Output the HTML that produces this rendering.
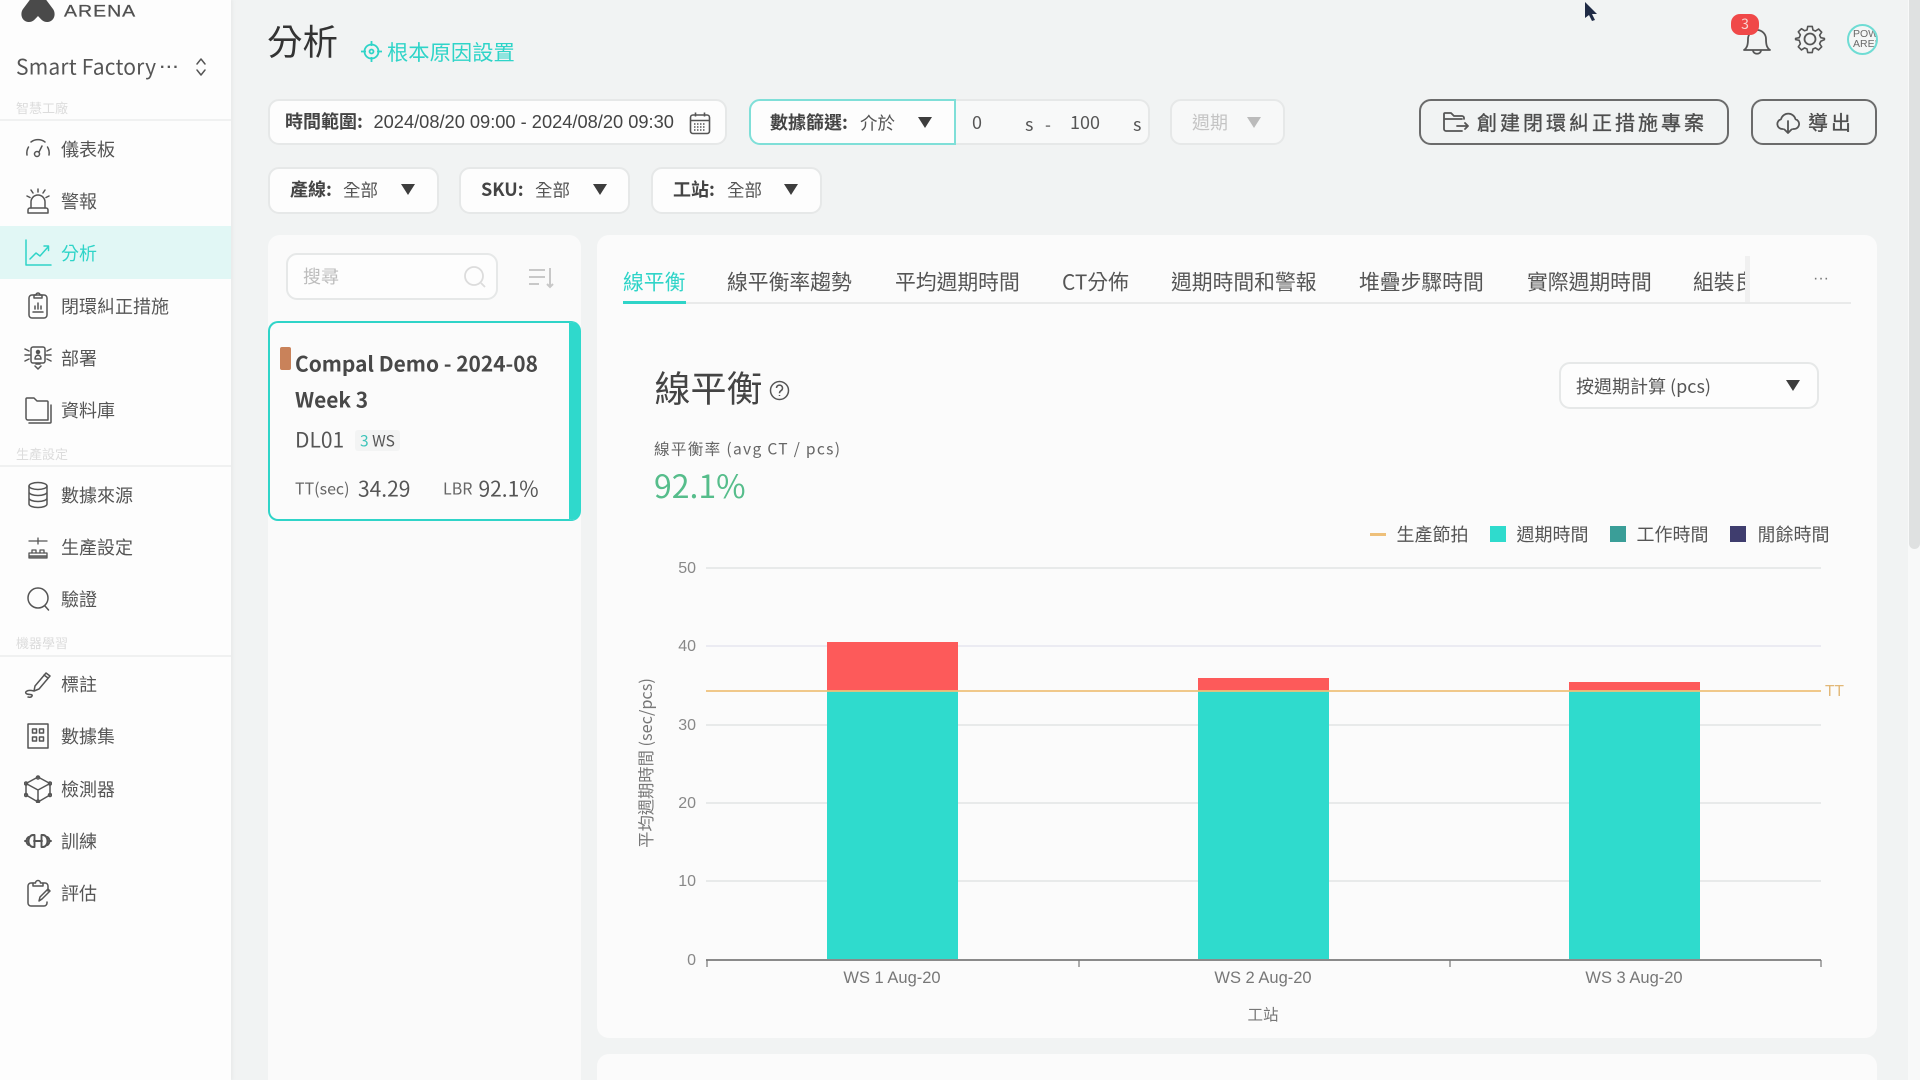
<!DOCTYPE html>
<html lang="zh-Hant"><head><meta charset="utf-8"><title>分析</title>
<style>
*{box-sizing:border-box}
html,body{margin:0;padding:0;width:1920px;height:1080px;overflow:hidden;background:#f1f3f3;font-family:"Noto Sans CJK TC","Liberation Sans",sans-serif;color:#555}
.a{position:absolute}
.t{position:absolute;transform:translateY(-50%);white-space:nowrap;line-height:1.2}
.box{position:absolute;background:#fdfdfd;border:2px solid #e6e8e8;border-radius:11px}
.side{position:absolute;left:0;top:0;width:231px;height:1080px;background:#fdfdfd;box-shadow:2px 0 3px #e8eaea}
.lab{position:absolute;left:16px;font-size:13px;color:#dcdcdc;transform:translateY(-50%);line-height:1.2}
.div{position:absolute;left:0;width:231px;height:2px;background:#f0f1f1}
.it{position:absolute;left:61px;font-size:18px;color:#555;transform:translateY(-50%);line-height:1.2;white-space:nowrap}
.ic{position:absolute;left:24px;width:28px;height:28px;fill:none;stroke:#555;stroke-width:1.5;stroke-linecap:round;stroke-linejoin:round}
.tri{position:absolute;width:0;height:0;border-left:7.5px solid transparent;border-right:7.5px solid transparent;border-top:11px solid #3d3d3d}
.b{font-weight:700;color:#444}
.tab{position:absolute;top:280.5px;font-size:20.8px;color:#555;transform:translateY(-50%);line-height:1.2;white-space:nowrap}
.leg{position:absolute;top:535px;font-size:18px;color:#555;transform:translateY(-50%);line-height:1.2;white-space:nowrap}
.sq{position:absolute;top:526px;width:16px;height:16px}
</style></head><body>

<!-- sidebar -->
<div class="side"></div>
<svg class="a" style="left:20px;top:-5px;width:36px;height:28px" viewBox="0 0 36 28"><path d="M18 -2C14 -2 12 2 9 6L3 14C0 18 1 26 8 27C13 27.500 15 24 18 21C21 24 23 27.500 28 27C35 26 36 18 33 14L27 6C24 2 22 -2 18 -2Z" fill="#4a4a4a"/></svg>
<div class="t" style="left:64px;top:12px;font:400 19.500px 'Liberation Sans',sans-serif;color:#505050;letter-spacing:1px;transform:translateY(-50%) scaleY(.85);transform-origin:left center;-webkit-text-stroke:.3px #505050">ARENA</div>
<div class="t" style="left:16px;top:67px;font-size:21px;color:#555;letter-spacing:.2px">Smart Factory</div>
<div class="t" style="left:160px;top:64px;font:700 16px 'Liberation Sans',sans-serif;color:#555;letter-spacing:2.200px">...</div>
<svg class="a" style="left:192px;top:56px;width:18px;height:22px;fill:none;stroke:#555;stroke-width:1.500;stroke-linecap:round;stroke-linejoin:round" viewBox="0 0 18 22"><path d="M5 8l4-5 4 5M5 14l4 5 4-5"/></svg>

<div class="lab" style="top:108px">智慧工廠</div><div class="div" style="top:119px"></div>
<div class="a" style="left:0;top:226px;width:231px;height:53px;background:#e1f7f5"></div>

<svg class="ic" style="top:134px" viewBox="0 0 28 28"><path d="M3 21a11.500 11.500 0 0 1 1.500-8M7 8a11.500 11.500 0 0 1 14 0M23.500 13a11.500 11.500 0 0 1 1.500 8"/><circle cx="13" cy="20" r="2.500"/><path d="M15 18l3-6"/></svg>
<div class="it" style="top:149.500px">儀表板</div>
<svg class="ic" style="top:187px" viewBox="0 0 28 28"><path d="M7 21v-6a7 7 0 0 1 14 0v6"/><path d="M4 26h20v-3a2 2 0 0 0-2-2H6a2 2 0 0 0-2 2z"/><path d="M14 2v3M7 3l2 3M21 3l-2 3M3 9l3 1.500M25 9l-3 1.500"/></svg>
<div class="it" style="top:201.500px">警報</div>
<svg class="ic" style="top:239px;stroke:#2fd4c8" viewBox="0 0 28 28"><path d="M2 1v25h25"/><path d="M6 20l6-6 4 3 8-9M20 7h4.500v4.500"/></svg>
<div class="it" style="top:254px;color:#2fd4c8">分析</div>
<svg class="ic" style="top:291px" viewBox="0 0 28 28"><rect x="5" y="4" width="18" height="23" rx="3"/><path d="M10 7V4h2a2 2 0 0 1 4 0h2v3zM9 21h10M11 18v-3M14 18v-6M17 18v-3"/></svg>
<div class="it" style="top:306.500px">閉環糾正措施</div>
<svg class="ic" style="top:344px" viewBox="0 0 28 28"><rect x="7" y="3" width="14" height="16" rx="2"/><circle cx="14" cy="8" r="1.500" fill="#555"/><path d="M11 15c0-5 6-5 6 0zM11 22l3 3 3-3M12 20h4M1 5l4 2M1 11h5M1 17l4-2M27 5l-4 2M27 11h-5M27 17l-4-2"/></svg>
<div class="it" style="top:358.500px">部署</div>
<svg class="ic" style="top:396px" viewBox="0 0 28 28"><path d="M2 22V3a1 1 0 0 1 1-1h7l3 3h10a1 1 0 0 1 1 1v18H4a2 2 0 0 1-2-2z"/><path d="M5 27h21a1 1 0 0 0 1-1V9"/></svg>
<div class="it" style="top:410.500px">資料庫</div>

<div class="lab" style="top:454px">生產設定</div><div class="div" style="top:465px"></div>
<svg class="ic" style="top:481px" viewBox="0 0 28 28"><ellipse cx="14" cy="5" rx="9" ry="3.500"/><path d="M5 5v18c0 2 4 3.500 9 3.500s9-1.500 9-3.500V5M5 11c0 2 4 3.500 9 3.500s9-1.500 9-3.500M5 17c0 2 4 3.500 9 3.500s9-1.500 9-3.500"/></svg>
<div class="it" style="top:495.500px">數據來源</div>
<svg class="ic" style="top:533px;stroke-width:1.300" viewBox="0 0 28 28"><path d="M5 8h18M14 5v6M8 20v-3h4v3M16 20v-3h4v3"/><path d="M5 20h18v3H5z"/><path d="M5 23h18v2H5z" fill="#888"/></svg>
<div class="it" style="top:548px">生產設定</div>
<svg class="ic" style="top:585px" viewBox="0 0 28 28"><circle cx="14" cy="13" r="10"/><path d="M21 21l3.500 4"/></svg>
<div class="it" style="top:600px">驗證</div>

<div class="lab" style="top:643px">機器學習</div><div class="div" style="top:655px"></div>
<svg class="ic" style="top:670px" viewBox="0 0 28 28"><path d="M11 16l11-13 4 3-11 13-5 2zM20 5l4 3M10 21c-8-2-10 2-7 3s6 0 5 2-3 1-4 1"/></svg>
<div class="it" style="top:685px">標註</div>
<svg class="ic" style="top:722px" viewBox="0 0 28 28"><rect x="4" y="2" width="20" height="24"/><rect x="8.500" y="7" width="4" height="4"/><rect x="15.500" y="7" width="4" height="4"/><rect x="8.500" y="15" width="4" height="4"/><rect x="15.500" y="15" width="4" height="4"/></svg>
<div class="it" style="top:737px">數據集</div>
<svg class="ic" style="top:775px" viewBox="0 0 28 28"><path d="M14 2L26 8.500V20L14 27 2 20V8.500zM2 8.500L14 15 26 8.500M14 15v12"/><circle cx="14" cy="2.500" r="1.500"/><circle cx="26" cy="8.500" r="1.500"/><circle cx="2" cy="8.500" r="1.500"/><circle cx="14" cy="26.500" r="1.500"/><circle cx="2" cy="20" r="1.500"/><circle cx="26" cy="20" r="1.500"/></svg>
<div class="it" style="top:789.500px">檢測器</div>
<svg class="ic" style="top:827px;stroke-width:1.900" viewBox="0 0 28 28"><path d="M1 14h2M27 14h-2M10 14h8"/><path d="M9 8a4.500 6 0 0 0 0 12h1.500V8zM19 8a4.500 6 0 0 1 0 12h-1.500V8z"/><path d="M4.500 10a5 5 0 0 0 0 8M23.500 10a5 5 0 0 1 0 8"/></svg>
<div class="it" style="top:841.500px">訓練</div>
<svg class="ic" style="top:879px" viewBox="0 0 28 28"><path d="M9 4H7a3 3 0 0 0-3 3v17a3 3 0 0 0 3 3h13a3 3 0 0 0 3-3v-1M19 4h2a3 3 0 0 1 3 3v5"/><path d="M9 7V4h2.500a2.500 2.500 0 0 1 5 0H19v3zM15 22l1-4 8-8 2 2-8 8z"/></svg>
<div class="it" style="top:893.500px">評估</div>

<!-- header -->
<div class="t" style="left:267px;top:41px;font-size:35.500px;color:#333">分析</div>
<svg class="a" style="left:361px;top:41px;width:21px;height:21px;fill:none;stroke:#2fd4c8;stroke-width:1.800" viewBox="0 0 21 21"><circle cx="10.500" cy="10.500" r="7"/><circle cx="10.500" cy="10.500" r="2"/><path d="M10.500 0v5M10.500 16v5M0 10.500h5M16 10.500h5"/></svg>
<div class="t" style="left:387px;top:51.500px;font-size:21.300px;color:#2fd4c8">根本原因設置</div>

<svg class="a" style="left:1584px;top:1px;width:15px;height:21px" viewBox="0 0 15 21"><path d="M1 1v16l4-3 3 6 3-1-3-6h5z" fill="#1f2a44"/></svg>

<svg class="a" style="left:1742px;top:24px;width:30px;height:32px;fill:none;stroke:#555;stroke-width:1.800;stroke-linecap:round;stroke-linejoin:round" viewBox="0 0 30 32"><path d="M2 26c3-2 4-5 4-11a9 9 0 0 1 18 0c0 6 1 9 4 11z M11 26c0 5 8 5 8 0"/></svg>
<div class="a" style="left:1731px;top:14px;width:28px;height:21px;border-radius:9px;background:#f04848;color:#f9d5d0;font-size:14px;text-align:center;line-height:21px">3</div>
<svg class="a" style="left:1794px;top:23px;width:32px;height:32px;fill:none;stroke:#555;stroke-width:1.800;stroke-linejoin:round" viewBox="0 0 32 32"><circle cx="16" cy="16" r="5.500"/><path d="M13.500 2h5l.8 4 2.800 1.200 3.400-2.300 3.500 3.500-2.300 3.400L28 14.500l4 .8v1.400l-4 1.800-1.300 2.800 2.300 3.400-3.500 3.500-3.400-2.300-2.800 1.200-.8 4h-5l-.8-4-2.800-1.200-3.400 2.300-3.500-3.500 2.300-3.400L4 17.500 0 16.700v-1.400l4-.8 1.300-3.100-2.300-3.400 3.500-3.500 3.400 2.300L12.700 6z" transform="translate(1.600 1.600) scale(.9)"/></svg>
<div class="a" style="left:1847px;top:24px;width:31px;height:31px;border-radius:50%;border:2px solid #6fdcd4;overflow:hidden;background:#f4f6f6;color:#6a6a6a;font:400 10.500px/9.500px 'Liberation Sans',sans-serif;padding:4px 0 0 4px;white-space:nowrap">POW<br>AREN</div>

<!-- filter row 1 -->
<div class="box" style="left:268px;top:99px;width:459px;height:46px"></div>
<div class="t b" style="left:285px;top:122px;font-size:18px">時間範圍:</div>
<div class="t" style="left:373.500px;top:122px;font:18.250px 'Liberation Sans',sans-serif;color:#444">2024/08/20 09:00 - 2024/08/20 09:30</div>
<svg class="a" style="left:689px;top:111px;width:22px;height:24px;fill:none;stroke:#555;stroke-width:1.600" viewBox="0 0 22 24"><rect x="1.500" y="4" width="19" height="18.500" rx="2.500"/><path d="M1.500 9.500h19M6.500 1.500v4M15.500 1.500v4"/><path d="M5 13h12M5 16h12M5 19h12" stroke-dasharray="1.500 1.500"/></svg>

<div class="box" style="left:955px;top:99px;width:195px;height:46px;border-radius:0 11px 11px 0;background:#f8f9f9;border-left:0"></div>
<div class="box" style="left:749px;top:99px;width:207px;height:46px;border-color:#7fdfd8;border-radius:11px 0 0 11px;background:#fdfdfd"></div>
<div class="t b" style="left:770px;top:123px;font-size:18px">數據篩選:</div>
<div class="t" style="left:860px;top:123px;font-size:17.500px;color:#555">介於</div>
<div class="tri" style="left:918px;top:117px"></div>
<div class="t" style="left:972px;top:123px;font-size:18px;color:#555">0</div>
<div class="t" style="left:1025px;top:125px;font-size:18px;color:#555">s</div>
<div class="t" style="left:1045px;top:124px;font-size:17px;color:#555">-</div>
<div class="t" style="left:1070px;top:123px;font-size:18px;color:#555">100</div>
<div class="t" style="left:1133px;top:125px;font-size:18px;color:#555">s</div>
<div class="box" style="left:1170px;top:99px;width:115px;height:46px;background:#f7f8f8"></div>
<div class="t" style="left:1192px;top:123px;font-size:18px;color:#c4c4c4">週期</div>
<div class="tri" style="left:1247px;top:117px;border-top-color:#bbb"></div>

<div class="a" style="left:1419px;top:99px;width:310px;height:46px;border:2px solid #6b6b6b;border-radius:12px"></div>
<svg class="a" style="left:1443px;top:111px;width:26px;height:22px;fill:none;stroke:#555;stroke-width:1.800;stroke-linecap:round;stroke-linejoin:round" viewBox="0 0 26 22"><path d="M19 20H3a2 2 0 0 1-2-2V3a1 1 0 0 1 1-1h6l3 3h8a2 2 0 0 1 2 2v1M1 8h18M14 15h11M22 12l3 3-3 3"/></svg>
<div class="t" style="left:1477px;top:122px;font-size:20px;color:#4e4e4e;letter-spacing:3px;-webkit-text-stroke:.35px #4e4e4e">創建閉環糾正措施專案</div>
<div class="a" style="left:1751px;top:99px;width:126px;height:46px;border:2px solid #6b6b6b;border-radius:12px"></div>
<svg class="a" style="left:1776px;top:111px;width:24px;height:24px;fill:none;stroke:#555;stroke-width:1.800;stroke-linecap:round;stroke-linejoin:round" viewBox="0 0 24 24"><path d="M7 18H6a5 5 0 0 1-1-9.800 7.500 7.500 0 0 1 14.500 0A5 5 0 0 1 18 18h-1M12 10v12M8.500 18.500L12 22l3.500-3.500"/></svg>
<div class="t" style="left:1808px;top:122px;font-size:20px;color:#4e4e4e;letter-spacing:3px;-webkit-text-stroke:.35px #4e4e4e">導出</div>

<!-- filter row 2 -->
<div class="box" style="left:268px;top:166.500px;width:171px;height:47px"></div>
<div class="t b" style="left:290px;top:190px;font-size:18px">產線:</div>
<div class="t" style="left:343px;top:190px;font-size:17.500px">全部</div>
<div class="tri" style="left:401px;top:184px"></div>
<div class="box" style="left:459px;top:166.500px;width:171px;height:47px"></div>
<div class="t b" style="left:481px;top:190px;font-size:18px">SKU:</div>
<div class="t" style="left:535px;top:190px;font-size:17.500px">全部</div>
<div class="tri" style="left:593px;top:184px"></div>
<div class="box" style="left:651px;top:166.500px;width:171px;height:47px"></div>
<div class="t b" style="left:673px;top:190px;font-size:18px">工站:</div>
<div class="t" style="left:727px;top:190px;font-size:17.500px">全部</div>
<div class="tri" style="left:784px;top:184px"></div>

<!-- left panel -->
<div class="a" style="left:268px;top:235px;width:313px;height:845px;background:#fafafa;border-radius:12px 12px 0 0"></div>
<div class="box" style="left:286px;top:253px;width:212px;height:47px"></div>
<div class="t" style="left:303px;top:277px;font-size:18px;color:#bdbdbd">搜尋</div>
<svg class="a" style="left:463px;top:264px;width:24px;height:26px;fill:none;stroke:#dcdcdc;stroke-width:1.800" viewBox="0 0 24 26"><circle cx="11" cy="12" r="9"/><path d="M18 19l4 4"/></svg>
<svg class="a" style="left:527px;top:266px;width:28px;height:24px;fill:none;stroke:#c8c8c8;stroke-width:2" viewBox="0 0 28 24"><path d="M2 4h16M2 11h16M2 18h10M23 2v19M20 18l3 3 3-3"/></svg>

<div class="a" style="left:268px;top:321px;width:313px;height:200px;background:#fbfbfb;border:2px solid #2fd4c8;border-right:12px solid #2fd9cc;border-radius:10px"></div>
<div class="a" style="left:280px;top:347px;width:11px;height:23px;background:#c9825a;border-radius:2px"></div>
<div class="t" style="left:295px;top:363.500px;font-size:20.900px;font-weight:700;color:#484848">Compal Demo - 2024-08</div>
<div class="t" style="left:295px;top:400px;font-size:20.900px;font-weight:700;color:#484848">Week 3</div>
<div class="t" style="left:295px;top:440px;font-size:21px;color:#555">DL01</div>
<div class="a" style="left:355px;top:430px;width:45px;height:21px;background:#f3f4f4;border-radius:3px"></div>
<div class="t" style="left:360px;top:441px;font-size:15.500px;color:#555"><span style="color:#3fc4ba">3</span> WS</div>
<div class="t" style="left:295px;top:488px;font-size:16px;color:#666">TT(sec)</div>
<div class="t" style="left:358px;top:489px;font-size:21px;color:#555">34.29</div>
<div class="t" style="left:443px;top:488px;font-size:16px;color:#666">LBR</div>
<div class="t" style="left:478.500px;top:489px;font-size:21px;color:#555">92.1%</div>

<!-- right panel -->
<div class="a" style="left:597px;top:235px;width:1280px;height:803px;background:#fbfbfb;border-radius:12px"></div>
<div class="a" style="left:597px;top:1054px;width:1280px;height:26px;background:#fbfbfb;border-radius:12px 12px 0 0"></div>

<div class="tab" style="left:623px;color:#2fd4c8">線平衡</div>
<div class="tab" style="left:727px">線平衡率趨勢</div>
<div class="tab" style="left:895px">平均週期時間</div>
<div class="tab" style="left:1062px">CT分佈</div>
<div class="tab" style="left:1171px">週期時間和警報</div>
<div class="tab" style="left:1359px">堆疊步驟時間</div>
<div class="tab" style="left:1527px">實際週期時間</div>
<div class="tab" style="left:1693px;width:56px;overflow:hidden">組裝良率</div>
<div class="a" style="left:1745px;top:256px;width:5px;height:46px;background:#f0f0f0"></div>
<div class="t" style="left:1813px;top:279px;font:16px 'Liberation Sans',sans-serif;color:#777">···</div>
<div class="a" style="left:623px;top:302px;width:1228px;height:2px;background:#e9eaea"></div>
<div class="a" style="left:623px;top:301px;width:63px;height:3px;background:#2fd4c8"></div>

<div class="t" style="left:654.500px;top:386.500px;font-size:36px;color:#444">線平衡</div>
<svg class="a" style="left:769px;top:380px;width:21px;height:21px;fill:none;stroke:#555;stroke-width:1.500" viewBox="0 0 21 21"><circle cx="10.500" cy="10.500" r="9"/><path d="M7.500 8a3 3 0 1 1 4.500 2.700c-1 .6-1.500 1.200-1.500 2.500M10.500 15v1"/></svg>
<div class="t" style="left:654px;top:449px;font-size:15.600px;color:#666;letter-spacing:1.300px">線平衡率 (avg CT / pcs)</div>
<div class="t" style="left:654px;top:485px;font-size:32px;color:#56bd8b">92.1%</div>

<div class="box" style="left:1559px;top:362px;width:260px;height:47px"></div>
<div class="t" style="left:1576px;top:386.500px;font-size:18px;color:#555">按週期計算 (pcs)</div>
<div class="tri" style="left:1786px;top:380px"></div>

<div class="a" style="left:1370px;top:533px;width:16px;height:3px;background:#eec07a"></div>
<div class="leg" style="left:1396.500px">生產節拍</div>
<div class="sq" style="left:1490px;background:#2fdbcd"></div>
<div class="leg" style="left:1516.500px">週期時間</div>
<div class="sq" style="left:1610px;background:#3a9e98"></div>
<div class="leg" style="left:1636.500px">工作時間</div>
<div class="sq" style="left:1730px;background:#3f3d6e"></div>
<div class="leg" style="left:1757.500px">閒餘時間</div>

<!-- chart -->
<svg class="a" style="left:0;top:0;width:1920px;height:1080px" viewBox="0 0 1920 1080">
<g stroke="#e8eaea" stroke-width="2"><path d="M706 568H1821M706 725H1821M706 803H1821M706 881H1821"/></g>
<path d="M706 646H1821" stroke="#e6e6f0" stroke-width="1.500"/>
<rect x="827" y="642" width="131" height="49" fill="#fd5a5a"/>
<rect x="1198" y="678" width="131" height="13" fill="#fd5a5a"/>
<rect x="1569" y="682" width="131" height="9" fill="#fd5a5a"/>
<rect x="827" y="691" width="131" height="269" fill="#2fdbcd"/>
<rect x="1198" y="691" width="131" height="269" fill="#2fdbcd"/>
<rect x="1569" y="691" width="131" height="269" fill="#2fdbcd"/>
<path d="M706 691H1821" stroke="#eec07a" stroke-width="1.800"/>
<path d="M706 960H1821" stroke="#8a8a8a" stroke-width="2"/>
<path d="M707 960v7M1079 960v7M1450 960v7M1821 960v7" stroke="#777" stroke-width="1.200"/>
<g font-family="Liberation Sans, sans-serif" font-size="16" fill="#888" text-anchor="end">
<text x="696" y="573">50</text><text x="696" y="651">40</text><text x="696" y="730">30</text><text x="696" y="808">20</text><text x="696" y="886">10</text><text x="696" y="965">0</text></g>
<g font-family="Liberation Sans, sans-serif" font-size="16.500" fill="#777" text-anchor="middle">
<text x="892" y="983">WS 1 Aug-20</text><text x="1263" y="983">WS 2 Aug-20</text><text x="1634" y="983">WS 3 Aug-20</text></g>
<text x="1263" y="1020" text-anchor="middle" font-size="15.500" fill="#777" font-family="Noto Sans CJK TC, sans-serif">工站</text>
<text transform="translate(652 763) rotate(-90)" text-anchor="middle" font-size="16.300" fill="#777" font-family="Noto Sans CJK TC, sans-serif">平均週期時間 (sec/pcs)</text>
<text x="1825" y="696" font-size="15.500" fill="#e2b877" font-family="Liberation Sans, sans-serif">TT</text>
</svg>

<!-- scrollbar -->
<div class="a" style="left:1908px;top:0;width:12px;height:1080px;background:#f8f9f9"></div>
<div class="a" style="left:1909px;top:0;width:11px;height:549px;background:#dfe1e1;border-radius:0 0 6px 6px"></div>
</body></html>
